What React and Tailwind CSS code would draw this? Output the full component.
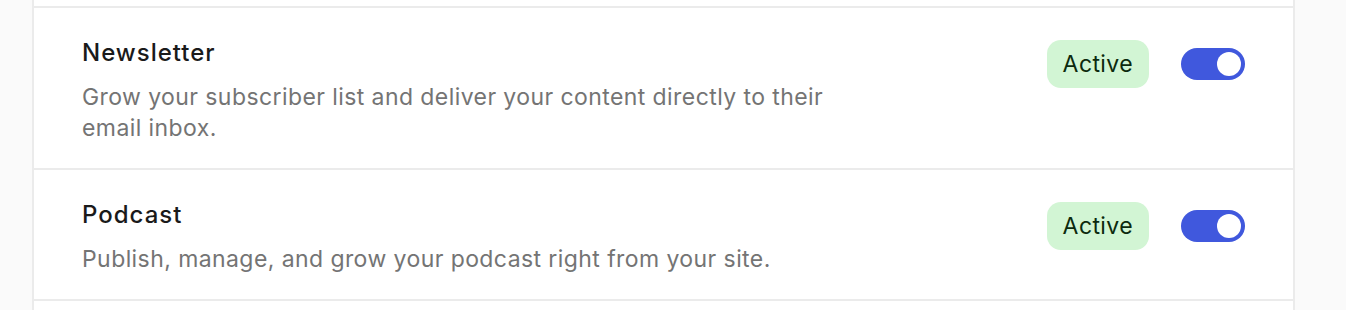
import React, { useState } from "react";

const features = [
  {
    id: "newsletter",
    title: "Newsletter",
    description:
      "Grow your subscriber list and deliver your content directly to their email inbox.",
  },
  {
    id: "podcast",
    title: "Podcast",
    description: "Publish, manage, and grow your podcast right from your site.",
  },
];

function Toggle({ on, onChange }) {
  return (
    <button
      type="button"
      onClick={() => onChange(!on)}
      className={
        "flex h-8 w-16 shrink-0 items-center rounded-full px-1 " +
        (on ? "justify-end bg-[#4058dd]" : "justify-start bg-[#d4d4d4]")
      }
    >
      <span className="block h-6 w-6 rounded-full bg-white" />
    </button>
  );
}

function FeatureRow({ feature }) {
  const [on, setOn] = useState(true);

  return (
    <div className="flex items-start justify-between border-b-2 border-[#ebebeb] pt-8 pr-12 pb-6 pl-12">
      <div className="flex max-w-[780px] flex-col gap-4">
        <h3 className="text-[24px] leading-[26px] font-medium tracking-[1px] text-[#1a1a1a]">
          {feature.title}
        </h3>
        <p className="text-[23px] leading-[31px] tracking-[0.42px] text-[#747474]">
          {feature.description}
        </p>
      </div>
      <div className="flex items-center gap-8">
        <span className="flex h-12 items-center rounded-[14px] bg-[#d2f5d4] px-[16px] text-[23px] tracking-[0.4px] text-[#0c2a0e]">
          {on ? "Active" : "Inactive"}
        </span>
        <Toggle on={on} onChange={setOn} />
      </div>
    </div>
  );
}

export default function App() {
  return (
    <div
      className="flex h-[310px] w-full overflow-hidden bg-[#fafafa]"
      style={{ fontFamily: "Inter, 'Noto Sans', sans-serif" }}
    >
      <div className="w-8 shrink-0" />
      <div className="flex w-[1263px] shrink-0 flex-col border-x-2 border-[#ebebeb] bg-white">
        <div className="h-[8px] shrink-0 border-b-2 border-[#ebebeb]" />
        {features.map((f) => (
          <FeatureRow key={f.id} feature={f} />
        ))}
        <div className="flex-1" />
      </div>
    </div>
  );
}
